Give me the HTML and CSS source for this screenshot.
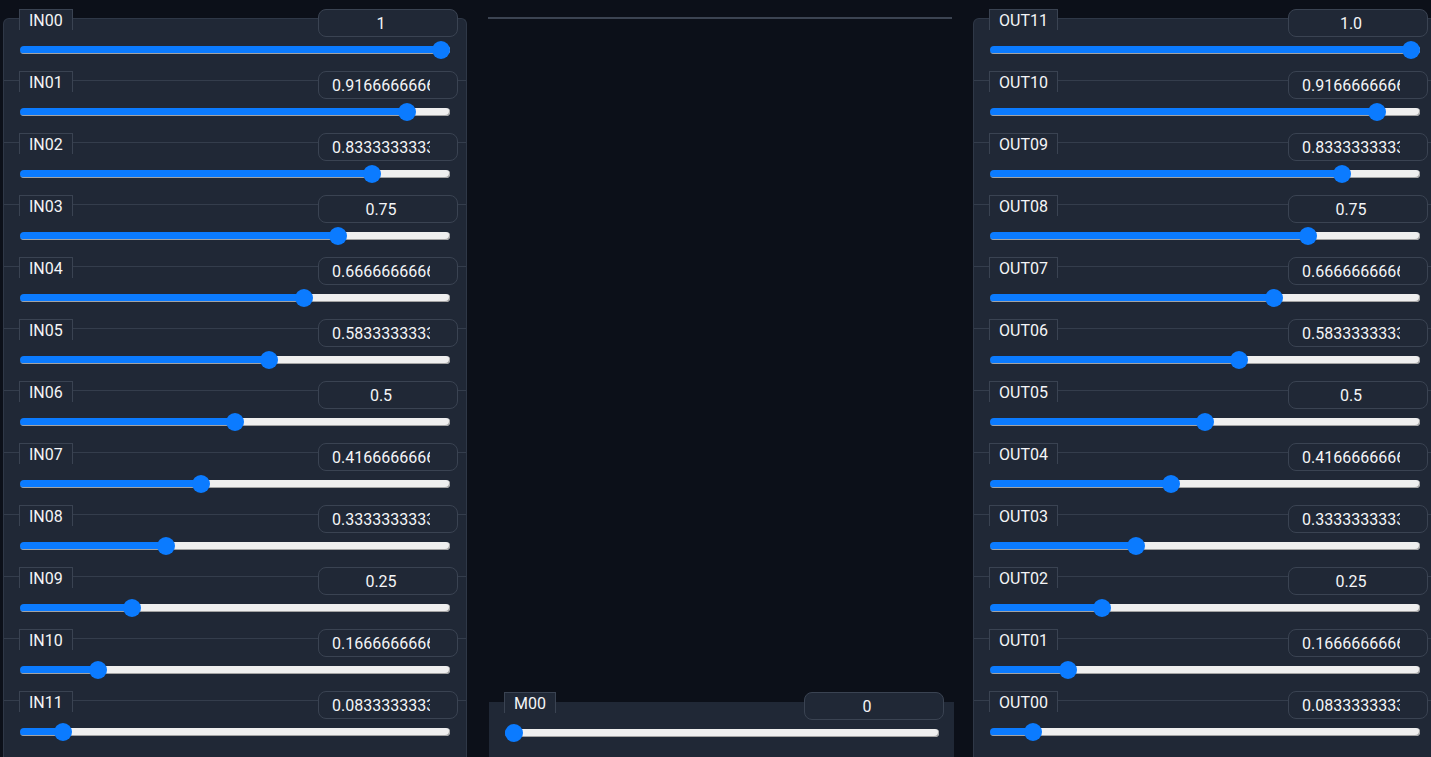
FILE: index.html
```html
<!DOCTYPE html>
<html lang="en">
<head>
<meta charset="utf-8">
<title>Mixer</title>
<link rel="stylesheet" href="styles.css">
</head>
<body>
<div class="page">
  <section class="panel">
    <div class="row"><div class="head"><span class="tag">IN00</span><input class="num" type="text" readonly value="1"></div><input class="range" type="range" min="0" max="1" step="any" value="1" style="--v:1"></div>
    <div class="row"><div class="head"><span class="tag">IN01</span><input class="num" type="text" readonly value="0.9166666666666666"></div><input class="range" type="range" min="0" max="1" step="any" value="0.9166666666666666" style="--v:0.9166666666666666"></div>
    <div class="row"><div class="head"><span class="tag">IN02</span><input class="num" type="text" readonly value="0.8333333333333334"></div><input class="range" type="range" min="0" max="1" step="any" value="0.8333333333333334" style="--v:0.8333333333333334"></div>
    <div class="row"><div class="head"><span class="tag">IN03</span><input class="num" type="text" readonly value="0.75"></div><input class="range" type="range" min="0" max="1" step="any" value="0.75" style="--v:0.75"></div>
    <div class="row"><div class="head"><span class="tag">IN04</span><input class="num" type="text" readonly value="0.6666666666666667"></div><input class="range" type="range" min="0" max="1" step="any" value="0.6666666666666667" style="--v:0.6666666666666667"></div>
    <div class="row"><div class="head"><span class="tag">IN05</span><input class="num" type="text" readonly value="0.5833333333333334"></div><input class="range" type="range" min="0" max="1" step="any" value="0.5833333333333334" style="--v:0.5833333333333334"></div>
    <div class="row"><div class="head"><span class="tag">IN06</span><input class="num" type="text" readonly value="0.5"></div><input class="range" type="range" min="0" max="1" step="any" value="0.5" style="--v:0.5"></div>
    <div class="row"><div class="head"><span class="tag">IN07</span><input class="num" type="text" readonly value="0.4166666666666667"></div><input class="range" type="range" min="0" max="1" step="any" value="0.4166666666666667" style="--v:0.4166666666666667"></div>
    <div class="row"><div class="head"><span class="tag">IN08</span><input class="num" type="text" readonly value="0.33333333333333337"></div><input class="range" type="range" min="0" max="1" step="any" value="0.33333333333333337" style="--v:0.33333333333333337"></div>
    <div class="row"><div class="head"><span class="tag">IN09</span><input class="num" type="text" readonly value="0.25"></div><input class="range" type="range" min="0" max="1" step="any" value="0.25" style="--v:0.25"></div>
    <div class="row"><div class="head"><span class="tag">IN10</span><input class="num" type="text" readonly value="0.16666666666666663"></div><input class="range" type="range" min="0" max="1" step="any" value="0.16666666666666663" style="--v:0.16666666666666663"></div>
    <div class="row"><div class="head"><span class="tag">IN11</span><input class="num" type="text" readonly value="0.08333333333333337"></div><input class="range" type="range" min="0" max="1" step="any" value="0.08333333333333337" style="--v:0.08333333333333337"></div>
  </section>

  <section class="middle">
    <div class="rule"></div>
    <div class="panel panel--bare">
      <div class="row"><div class="head"><span class="tag">M00</span><input class="num" type="text" readonly value="0"></div><input class="range" type="range" min="0" max="1" step="any" value="0" style="--v:0"></div>
    </div>
  </section>

  <section class="panel">
    <div class="row"><div class="head"><span class="tag">OUT11</span><input class="num" type="text" readonly value="1.0"></div><input class="range" type="range" min="0" max="1" step="any" value="1" style="--v:1"></div>
    <div class="row"><div class="head"><span class="tag">OUT10</span><input class="num" type="text" readonly value="0.9166666666666666"></div><input class="range" type="range" min="0" max="1" step="any" value="0.9166666666666666" style="--v:0.9166666666666666"></div>
    <div class="row"><div class="head"><span class="tag">OUT09</span><input class="num" type="text" readonly value="0.8333333333333334"></div><input class="range" type="range" min="0" max="1" step="any" value="0.8333333333333334" style="--v:0.8333333333333334"></div>
    <div class="row"><div class="head"><span class="tag">OUT08</span><input class="num" type="text" readonly value="0.75"></div><input class="range" type="range" min="0" max="1" step="any" value="0.75" style="--v:0.75"></div>
    <div class="row"><div class="head"><span class="tag">OUT07</span><input class="num" type="text" readonly value="0.6666666666666667"></div><input class="range" type="range" min="0" max="1" step="any" value="0.6666666666666667" style="--v:0.6666666666666667"></div>
    <div class="row"><div class="head"><span class="tag">OUT06</span><input class="num" type="text" readonly value="0.5833333333333334"></div><input class="range" type="range" min="0" max="1" step="any" value="0.5833333333333334" style="--v:0.5833333333333334"></div>
    <div class="row"><div class="head"><span class="tag">OUT05</span><input class="num" type="text" readonly value="0.5"></div><input class="range" type="range" min="0" max="1" step="any" value="0.5" style="--v:0.5"></div>
    <div class="row"><div class="head"><span class="tag">OUT04</span><input class="num" type="text" readonly value="0.4166666666666667"></div><input class="range" type="range" min="0" max="1" step="any" value="0.4166666666666667" style="--v:0.4166666666666667"></div>
    <div class="row"><div class="head"><span class="tag">OUT03</span><input class="num" type="text" readonly value="0.33333333333333337"></div><input class="range" type="range" min="0" max="1" step="any" value="0.33333333333333337" style="--v:0.33333333333333337"></div>
    <div class="row"><div class="head"><span class="tag">OUT02</span><input class="num" type="text" readonly value="0.25"></div><input class="range" type="range" min="0" max="1" step="any" value="0.25" style="--v:0.25"></div>
    <div class="row"><div class="head"><span class="tag">OUT01</span><input class="num" type="text" readonly value="0.16666666666666663"></div><input class="range" type="range" min="0" max="1" step="any" value="0.16666666666666663" style="--v:0.16666666666666663"></div>
    <div class="row"><div class="head"><span class="tag">OUT00</span><input class="num" type="text" readonly value="0.08333333333333337"></div><input class="range" type="range" min="0" max="1" step="any" value="0.08333333333333337" style="--v:0.08333333333333337"></div>
  </section>
</div>
</body>
</html>
```

FILE: styles.css
```css
html, body {
  margin: 0;
  height: 100%;
  overflow: hidden;
  background: #0c1019;
}

body {
  font-family: Roboto, "Liberation Sans", sans-serif;
  font-size: 16px;
  color: #f4f5f7;
}

.page {
  display: grid;
  grid-template-columns: 464px 464px 464px;
  column-gap: 21px;
  align-items: start;
  padding: 18px 0 0 3px;
}

.panel {
  background: #202836;
  border: 1px solid #2f3847;
  border-bottom: none;
  border-radius: 6px 6px 0 0;
}

.row {
  display: flex;
  flex-direction: column;
  height: 61px;
  padding: 0 8px 0 15px;
}

.row + .row {
  border-top: 1px solid #343d4c;
}

.head {
  display: flex;
  justify-content: space-between;
  align-items: flex-start;
  margin-top: -10px;
  height: 28px;
  flex: none;
}

.tag {
  box-sizing: border-box;
  height: 21px;
  padding: 1px 9px 0;
  line-height: 20px;
  border: 1px solid #3a4352;
  border-bottom: none;
  background: #202836;
  white-space: nowrap;
}

.num {
  box-sizing: border-box;
  width: 140px;
  height: 28px;
  margin: 0;
  padding: 0 27px 0 13px;
  border: 1px solid #3a4352;
  border-radius: 8px;
  background: #202836;
  color: #f4f5f7;
  font: inherit;
  text-align: center;
  outline: none;
}

.range {
  -webkit-appearance: none;
  appearance: none;
  display: block;
  flex: none;
  box-sizing: border-box;
  width: calc(100% - 9px);
  height: 18px;
  margin: 4px 8px 0 1px;
  padding: 0;
  background: transparent;
}

.range::-webkit-slider-runnable-track {
  height: 8px;
  border-radius: 4px;
  background: linear-gradient(to right, #0b7bff 0, #0b7bff calc(9px + var(--v) * (100% - 18px)), #efefef calc(9px + var(--v) * (100% - 18px)));
  box-shadow: inset -1px -1px 0 #a3a3a3;
}

.range::-webkit-slider-thumb {
  -webkit-appearance: none;
  appearance: none;
  width: 18px;
  height: 18px;
  margin-top: -5px;
  border: none;
  border-radius: 50%;
  background: #0b7bff;
}

.middle {
  display: flex;
  flex-direction: column;
  height: 740px;
  margin-top: -1px;
}

.rule {
  height: 2px;
  background: #3c4452;
}

.panel--bare {
  margin: auto -2px 0 1px;
  height: 55px;
  border: none;
  border-radius: 0;
}

.panel--bare .row {
  padding: 0 10px 0 15px;
}

.panel--bare .range {
  width: calc(100% - 6px);
  margin-right: 5px;
}
```
